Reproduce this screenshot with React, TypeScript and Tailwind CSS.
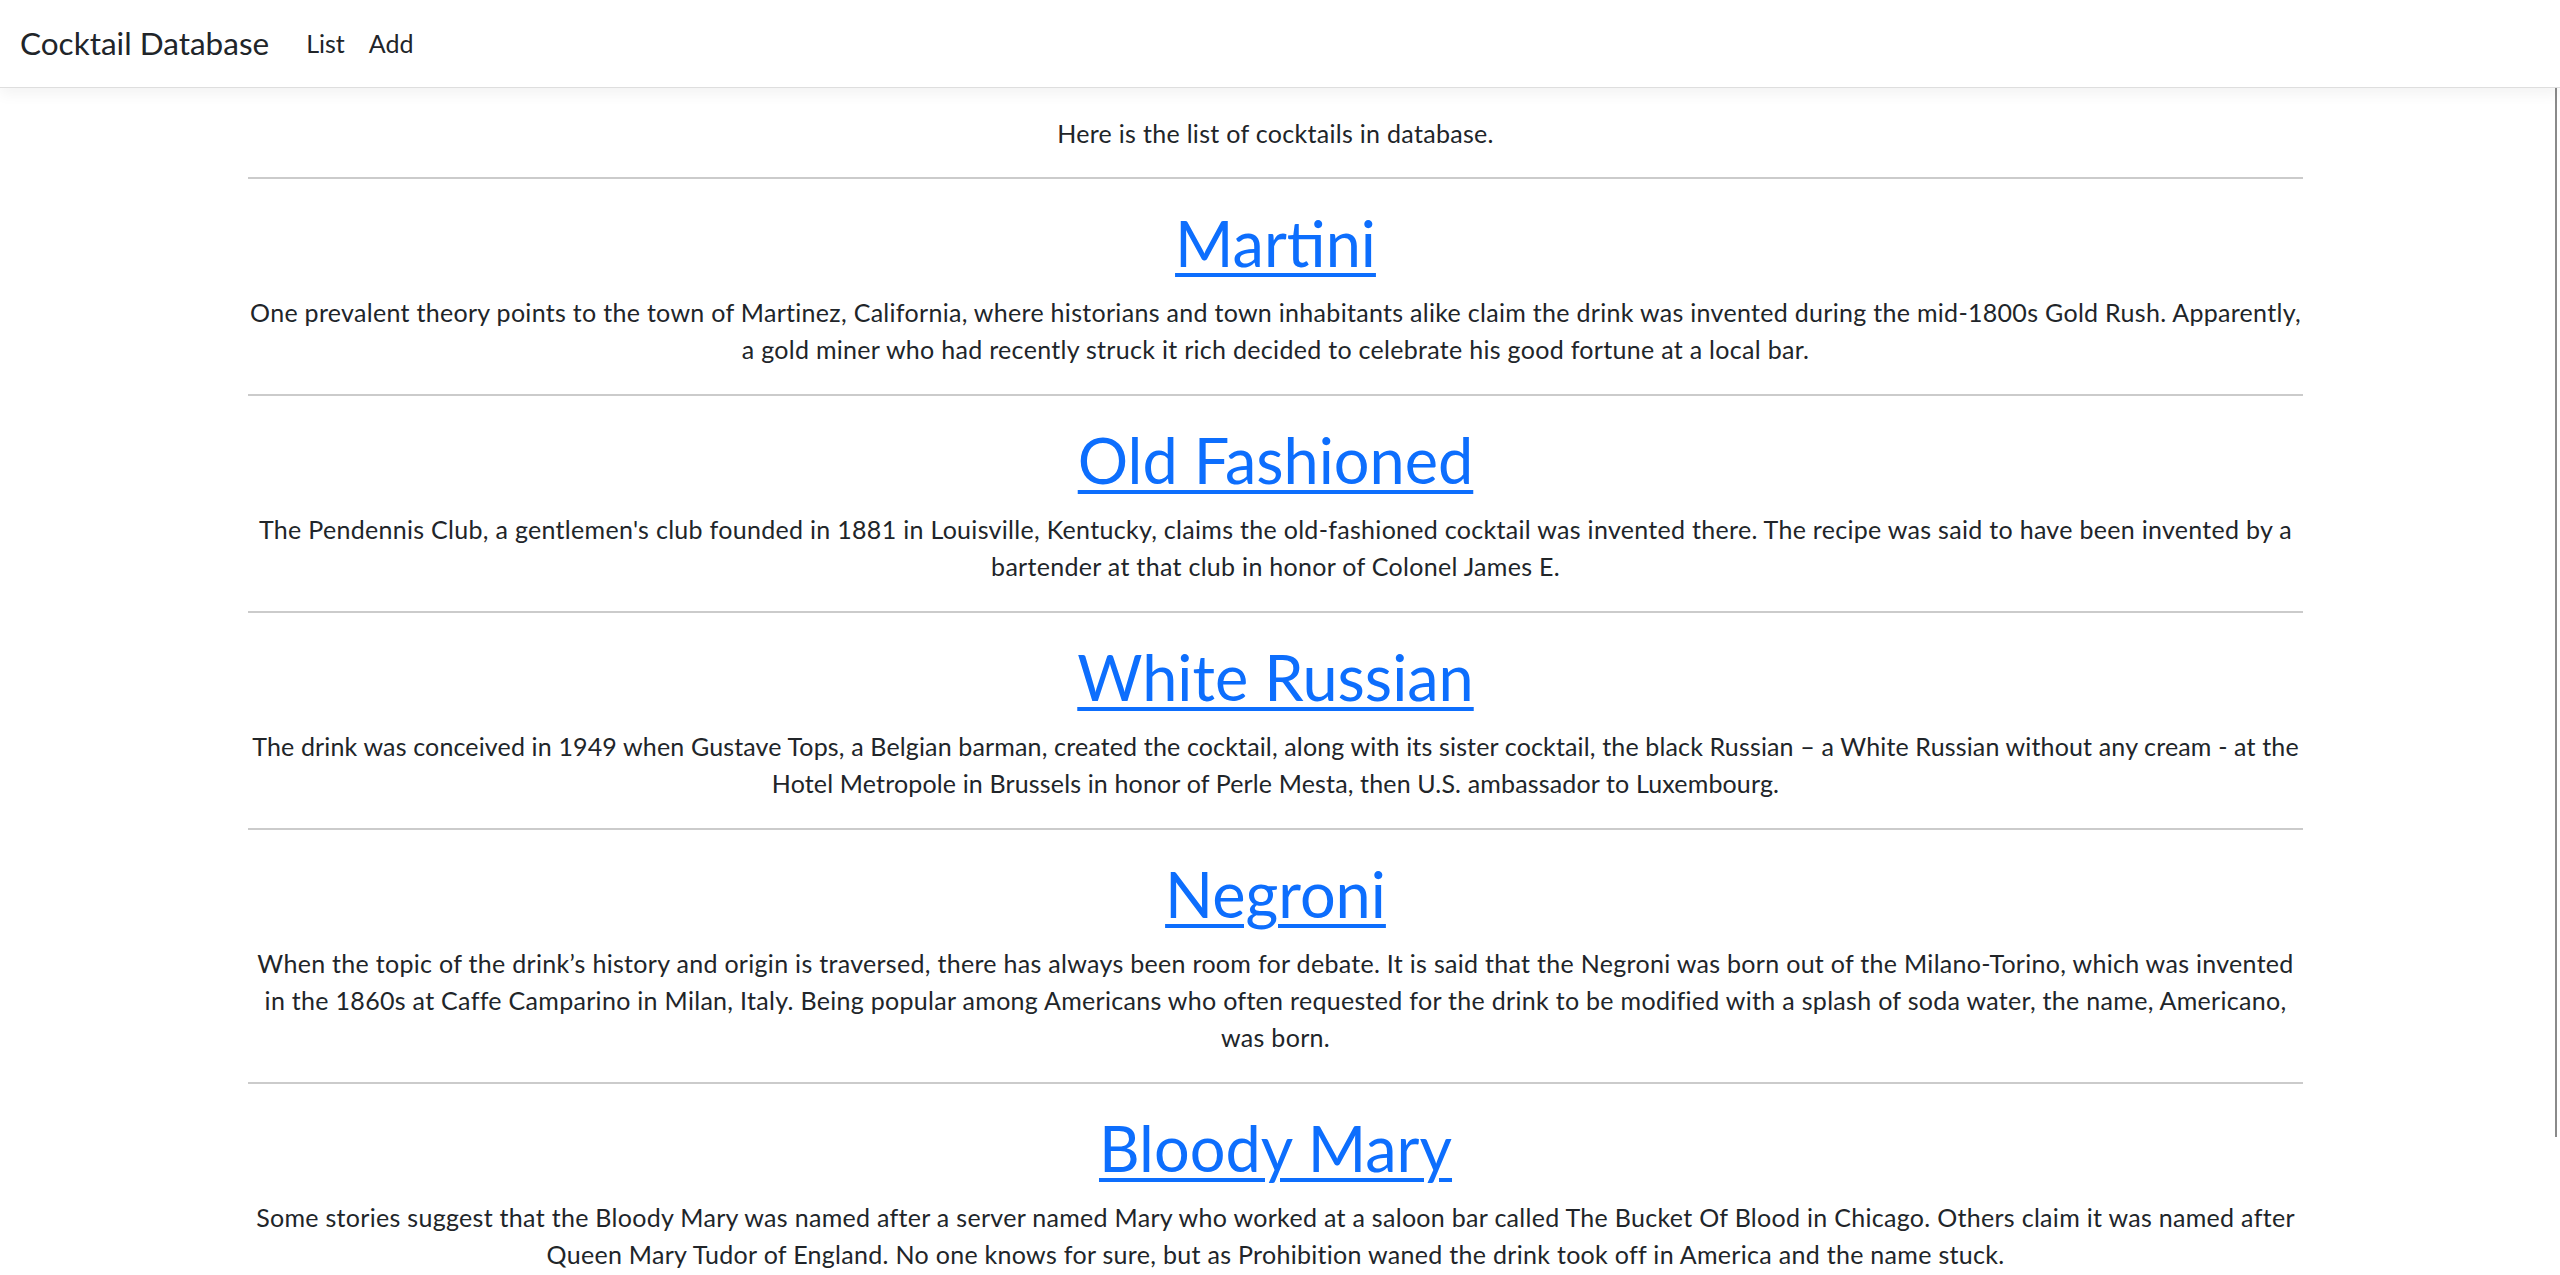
import React from "react";

type Cocktail = {
  name: string;
  story: string;
  tight?: boolean;
};

const cocktails: Cocktail[] = [
  {
    name: "Martini",
    story:
      "One prevalent theory points to the town of Martinez, California, where historians and town inhabitants alike claim the drink was invented during the mid-1800s Gold Rush. Apparently, a gold miner who had recently struck it rich decided to celebrate his good fortune at a local bar.",
  },
  {
    name: "Old Fashioned",
    story:
      "The Pendennis Club, a gentlemen's club founded in 1881 in Louisville, Kentucky, claims the old-fashioned cocktail was invented there. The recipe was said to have been invented by a bartender at that club in honor of Colonel James E.",
  },
  {
    name: "White Russian",
    story:
      "The drink was conceived in 1949 when Gustave Tops, a Belgian barman, created the cocktail, along with its sister cocktail, the black Russian – a White Russian without any cream - at the Hotel Metropole in Brussels in honor of Perle Mesta, then U.S. ambassador to Luxembourg.",
    tight: true,
  },
  {
    name: "Negroni",
    story:
      "When the topic of the drink’s history and origin is traversed, there has always been room for debate. It is said that the Negroni was born out of the Milano-Torino, which was invented in the 1860s at Caffe Camparino in Milan, Italy. Being popular among Americans who often requested for the drink to be modified with a splash of soda water, the name, Americano, was born.",
  },
  {
    name: "Bloody Mary",
    story:
      "Some stories suggest that the Bloody Mary was named after a server named Mary who worked at a saloon bar called The Bucket Of Blood in Chicago. Others claim it was named after Queen Mary Tudor of England. No one knows for sure, but as Prohibition waned the drink took off in America and the name stuck.",
  },
];

const Navbar = () => (
  <nav className="relative z-10 flex h-[88px] items-center border-b border-[#dedede] bg-white px-[20px] tracking-normal shadow-[0_6px_14px_rgba(0,0,0,0.05)]">
    <a href="#" className="mr-[24px] text-[31.5px] leading-none text-[#212529]">
      Cocktail Database
    </a>
    <a href="#" className="px-[13px] text-[25px] leading-none text-[#212529]">
      List
    </a>
    <a href="#" className="px-[11px] text-[25px] leading-none text-[#212529]">
      Add
    </a>
  </nav>
);

const CocktailItem = ({ item }: { item: Cocktail }) => (
  <section>
    <hr className="border-0 border-t-2 border-[#cbcbcb]" />
    <h1 className="mt-[25px] mb-[13px] text-[63px] leading-[77px] tracking-normal">
      <a
        href="#"
        className="text-[#0d6efd] underline decoration-4 underline-offset-[6px]"
      >
        {item.name}
      </a>
    </h1>
    <p className={item.tight ? "mb-[26px] leading-[37px] tracking-[0.15px]" : "mb-[26px] leading-[37px]"}>
      {item.story}
    </p>
  </section>
);

export default function App() {
  return (
    <div
      className="relative h-[1275px] overflow-hidden bg-white text-[25px] tracking-[0.3px] text-[#212529]"
      style={{ fontFamily: "Lato, 'Noto Sans', sans-serif" }}
    >
      <Navbar />
      <main className="ml-[248px] w-[2055px] text-center">
        <p className="mt-[27px] mb-[25px] leading-[37px]">
          Here is the list of cocktails in database.
        </p>
        {cocktails.map((c) => (
          <CocktailItem key={c.name} item={c} />
        ))}
      </main>
      {/* overlay scrollbar thumb */}
      <div className="absolute top-[11px] right-[3px] h-[1126px] w-[2px] bg-[#8a8a8a]" />
    </div>
  );
}
